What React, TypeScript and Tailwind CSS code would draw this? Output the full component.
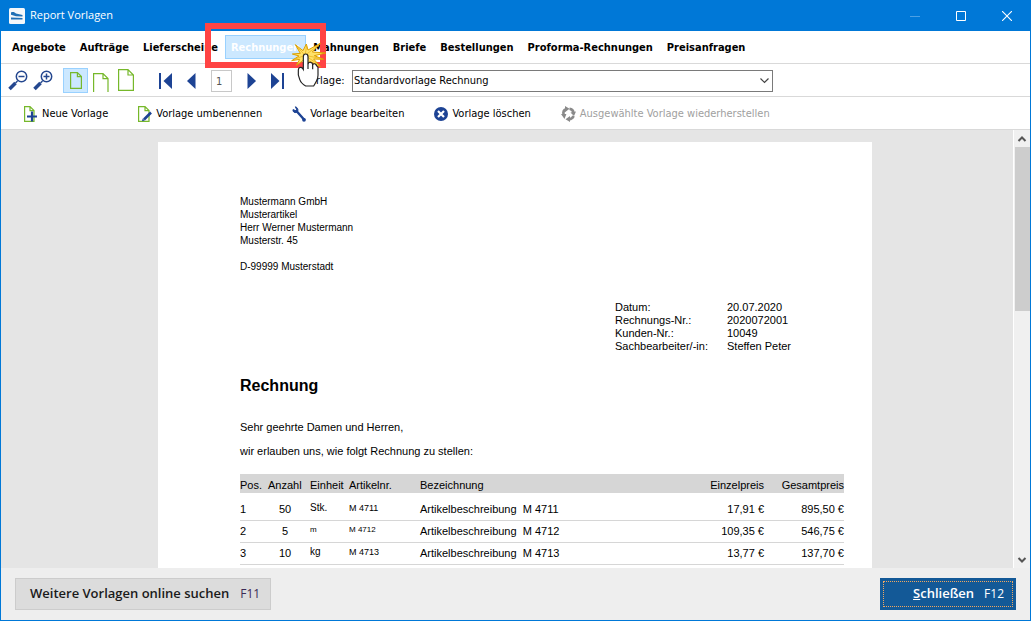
import type { ReactNode } from "react";

const menuItems = [
  "Angebote",
  "Aufträge",
  "Lieferscheine",
  "Rechnungen",
  "Mahnungen",
  "Briefe",
  "Bestellungen",
  "Proforma-Rechnungen",
  "Preisanfragen",
];

const address = [
  "Mustermann GmbH",
  "Musterartikel",
  "Herr Werner Mustermann",
  "Musterstr. 45",
  "",
  "D-99999 Musterstadt",
];

const meta = [
  ["Datum:", "20.07.2020"],
  ["Rechnungs-Nr.:", "2020072001"],
  ["Kunden-Nr.:", "10049"],
  ["Sachbearbeiter/-in:", "Steffen Peter"],
];

type Row = {
  pos: number;
  count: number;
  unit: string;
  sku: string;
  small?: boolean;
  price: string;
  total: string;
};

const rows: Row[] = [
  { pos: 1, count: 50, unit: "Stk.", sku: "M 4711", price: "17,91 €", total: "895,50 €" },
  { pos: 2, count: 5, unit: "m", sku: "M 4712", small: true, price: "109,35 €", total: "546,75 €" },
  { pos: 3, count: 10, unit: "kg", sku: "M 4713", price: "13,77 €", total: "137,70 €" },
];

function Magnifier({ plus }: { plus?: boolean }) {
  return (
    <svg width="20" height="21" viewBox="0 0 20 21" fill="none">
      <circle cx="13.5" cy="6.5" r="5.2" stroke="#24478f" strokeWidth="1.5" />
      <path d="M9.5 11 7.5 13" stroke="#24478f" strokeWidth="1.5" />
      <path d="M7.5 13 1.5 19" stroke="#24478f" strokeWidth="3.6" />
      <path d={plus ? "M10.5 6.5h6M13.5 3.5v6" : "M10.5 6.5h6"} stroke="#24478f" strokeWidth="1.5" />
    </svg>
  );
}

function PageOutline({ open, large }: { open?: boolean; large?: boolean }) {
  if (large) {
    return (
      <svg width="16" height="22" viewBox="0 0 16 22" fill="none" stroke="#76b82a" strokeWidth="1.2">
        <path d="M.6.6h9.4l5.4 5.4v15.4H.6z M10 .6V6h5.4" />
      </svg>
    );
  }
  return (
    <svg width="16" height="20" viewBox="0 0 16 20" fill="none" stroke="#76b82a" strokeWidth="1.2">
      {open ? (
        <path d="M.6 20V1.6h9.4L15 6.6V20 M10 1.6v5h5" />
      ) : (
        <path d="M2.6 2.6h6.8l4 4v11.8H2.6z M9.4 2.6v4h4" />
      )}
    </svg>
  );
}

function Arrow({ left, bar }: { left?: boolean; bar?: boolean }) {
  return (
    <svg width="13" height="16" viewBox="0 0 13 16" fill="#1d4394" className={left ? "rotate-180" : ""}>
      <path d={bar ? "M0 0l8.5 8L0 16zM11 0h2v16h-2z" : "M2.5 0l8.5 8-8.5 8z"} />
    </svg>
  );
}

function NewIcon() {
  return (
    <svg width="15" height="16" viewBox="0 0 15 16" fill="none">
      <path d="M1.6.6h5.4l4 4v10.8H1.6z M7 .6v4h4" stroke="#76b82a" strokeWidth="1.2" />
      <path d="M9 5.5v10M4 10.5h10" stroke="#1d4394" strokeWidth="2.2" />
    </svg>
  );
}

function RenameIcon() {
  return (
    <svg width="14" height="16" viewBox="0 0 14 16" fill="none">
      <path d="M.6.6H7l4 4v10.8H.6z M7 .6v4h4" stroke="#76b82a" strokeWidth="1.2" />
      <path d="M13 6.5l-7 7" stroke="#1d4394" strokeWidth="2.6" />
      <path d="M4 15.3l.7-2.8 2 2z" fill="#1d4394" />
    </svg>
  );
}

function WrenchIcon() {
  return (
    <svg width="14" height="16" viewBox="0 0 14 16" fill="none" stroke="#1d4394">
      <path d="M4.5 5l7.5 8.5" strokeWidth="2.4" strokeLinecap="round" />
      <path d="M3.4.8l1.2 2.6-1.2 1.2L1 3.6C.6 5.7 2.4 7.2 4.6 6.4 6.8 5 6.2 1.7 3.4.8z" fill="#1d4394" />
      <circle cx="12" cy="13.8" r="1" strokeWidth="1.8" />
    </svg>
  );
}

function DeleteIcon() {
  return (
    <svg width="14" height="14" viewBox="0 0 14 14">
      <circle cx="7" cy="7" r="7" fill="#1d4394" />
      <path d="M4 4l6 6M10 4l-6 6" stroke="#fff" strokeWidth="2.2" />
    </svg>
  );
}

function RestoreIcon() {
  return (
    <svg width="15" height="16" viewBox="0 0 15 16" fill="none" stroke="#8a8a8a" strokeWidth="2.6">
      <path d="M2.6 8.5C2 6 3 4 5 3.2" />
      <path d="M8.5 2.8c2.3.3 3.7 1.7 4 4" />
      <path d="M12.6 10c-.8 2-2 3-4.6 3.2" />
      <path d="M4 0l4.5 2.8L4 6.2zM15 5.5l-2 4.5-3.5-3.5zM9 10v6l-4.5-2.8zM0 8h5.4L3.5 13z" fill="#8a8a8a" stroke="none" />
    </svg>
  );
}

function ClickCursor() {
  return (
    <svg
      width="36"
      height="48"
      viewBox="20 30 108 144"
      aria-hidden="true"
      className="pointer-events-none absolute top-[5px] -right-[21px] z-20"
    >
      <path
        d="M33 44L56 62 66 42 71 60 108 40 84 66 124 69 90 77 118 88 88 87 108 110 76 94 68 110 56 92 36 106 46 88 22 92 44 78 24 72 48 70z"
        fill="#ffe169"
        stroke="#dda000"
        strokeWidth="3"
      />
      <path d="M38 50l24 26 40-30M30 88l32-12 50 10M62 76l38 26M62 76l5-28" stroke="#e8ae10" strokeWidth="2" fill="none" />
      <path
        d="M57 80q0-8 7-8t7 8v22q2-6 8-5 6 1 6 7 3-4 8-2 3 2 4 6 4 0 4 6v22q0 10-5 18-4 8-8 14H64q-14-8-18-20-6-14-4-28 1-9 8-8 4 1 7 6z"
        fill="#fff"
        stroke="#222"
        strokeWidth="3.5"
      />
      <path d="M71 101v16M85 104v14" stroke="#222" strokeWidth="3.5" />
    </svg>
  );
}

function Action({ icon, children, disabled }: { icon: ReactNode; children: string; disabled?: boolean }) {
  return (
    <button type="button" disabled={disabled} className="flex items-center gap-1 whitespace-nowrap disabled:text-[#a0a0a0]">
      {icon}
      {children}
    </button>
  );
}

function TitleBar() {
  return (
    <header className="flex h-[31px] shrink-0 items-center bg-[#0078d7] pl-2 text-white">
      <svg width="16" height="16" viewBox="0 0 16 16">
        <rect width="16" height="16" rx="1.5" fill="#f4f7fa" />
        <path d="M2 4.5C4 3.6 6 4.400 7 5.6l6.500 1.400v1.600L7 8.200 2 6.800zM2 9.600l11.500.4v1.600H2z" fill="#1f6fb5" />
      </svg>
      <h1 className="flex-1 pl-[5px] font-['Open_Sans','Noto_Sans',sans-serif] text-[11px]">Report Vorlagen</h1>
      <button type="button" aria-label="Minimieren" className="flex w-[46px] justify-center">
        <svg width="10" height="10" viewBox="0 0 10 10" stroke="#4ba0e5">
          <path d="M0 5.5h10" />
        </svg>
      </button>
      <button type="button" aria-label="Maximieren" className="flex w-[46px] justify-center">
        <svg width="10" height="10" viewBox="0 0 10 10" fill="none" stroke="#fff">
          <path d="M.5.5h9v9h-9z" />
        </svg>
      </button>
      <button type="button" aria-label="Fenster schließen" className="flex w-[46px] justify-center">
        <svg width="10" height="10" viewBox="0 0 10 10" stroke="#fff" strokeWidth="1.1">
          <path d="M0 0l10 10M10 0L0 10" />
        </svg>
      </button>
    </header>
  );
}

function Menu() {
  return (
    <nav className="flex h-[33px] shrink-0 items-center border-b border-[#d9d9d9] pl-1 font-bold">
      {menuItems.map((item) =>
        item === "Rechnungen" ? (
          <div key={item} className="relative">
            <button type="button" className="block h-6 border border-[#99d1ff] bg-[#cce8ff] px-[5px] pt-0.5 text-white">
              {item}
            </button>
            <span className="pointer-events-none absolute -top-3 -right-5 -bottom-[9px] -left-5 z-10 border-6 border-[#ff4444]" />
            <ClickCursor />
          </div>
        ) : (
          <button key={item} type="button" className="h-6 px-[7px] pt-0.5 whitespace-nowrap">
            {item}
          </button>
        )
      )}
    </nav>
  );
}

function Toolbar() {
  return (
    <div className="flex h-[33px] shrink-0 items-center border-b border-[#d9d9d9] pl-[7px]">
      <div className="flex items-center gap-[5px]">
        <button type="button" aria-label="Verkleinern">
          <Magnifier />
        </button>
        <button type="button" aria-label="Vergrößern">
          <Magnifier plus />
        </button>
      </div>
      <div className="ml-[10px] flex items-center gap-[5px]">
        <button
          type="button"
          aria-label="Ganze Seite"
          className="flex h-[25px] w-[25px] items-center justify-center border border-[#99d1ff] bg-[#cce8ff]"
        >
          <PageOutline />
        </button>
        <button type="button" aria-label="Seitenbreite" className="mt-1">
          <PageOutline open />
        </button>
        <button type="button" aria-label="Originalgröße" className="ml-1">
          <PageOutline large />
        </button>
      </div>
      <div className="ml-[25px] flex items-center gap-[13px] pt-0.5">
        <button type="button" aria-label="Erste Seite">
          <Arrow left bar />
        </button>
        <button type="button" aria-label="Vorherige Seite">
          <Arrow left />
        </button>
        <input
          aria-label="Seite"
          defaultValue="1"
          className="h-[22px] w-[21px] border border-[#c8c8c8] pl-1 text-[#555]"
        />
        <button type="button" aria-label="Nächste Seite">
          <Arrow />
        </button>
        <button type="button" aria-label="Letzte Seite">
          <Arrow bar />
        </button>
      </div>
      <div className="ml-5 flex min-w-0 items-center pt-0.5">
        <label htmlFor="template" className="w-12">
          Vorlage:
        </label>
        <div className="relative">
          <select id="template" className="block h-[22px] w-[421px] appearance-none border border-[#7a7a7a] bg-white pl-px">
            <option>Standardvorlage Rechnung</option>
          </select>
          <svg
            width="9"
            height="6"
            viewBox="0 0 9 6"
            fill="none"
            stroke="#444"
            strokeWidth="1.2"
            className="pointer-events-none absolute top-2 right-1"
          >
            <path d="M.5.5l4 4 4-4" />
          </svg>
        </div>
      </div>
    </div>
  );
}

function Report() {
  return (
    <article className="mt-3 w-[714px] shrink-0 bg-white px-[82px] pt-[53px] font-['Liberation_Sans',Arial,sans-serif] text-[11px]">
      <address className="text-[10px] leading-[13px] not-italic">
        {address.map((line, i) => (
          <p key={i} className="h-[13px]">
            {line}
          </p>
        ))}
      </address>
      <dl className="mt-7 ml-[375px] grid grid-cols-[112px_1fr] leading-[13px] whitespace-nowrap">
        {meta.map(([label, value]) => (
          <div key={label} className="contents">
            <dt>{label}</dt>
            <dd>{value}</dd>
          </div>
        ))}
      </dl>
      <h2 className="mt-[23px] text-[16px] leading-5 font-bold">Rechnung</h2>
      <p className="mt-[23px] leading-4">Sehr geehrte Damen und Herren,</p>
      <p className="mt-2 leading-4">wir erlauben uns, wie folgt Rechnung zu stellen:</p>
      <table className="mt-[15px] w-[604px] table-fixed border-collapse leading-4">
        <colgroup>
          <col className="w-7" />
          <col className="w-[42px]" />
          <col className="w-[39px]" />
          <col className="w-[71px]" />
          <col />
          <col className="w-20" />
          <col className="w-20" />
        </colgroup>
        <thead>
          <tr className="h-[19px] bg-[#d6d6d6] text-left [&>th]:p-0 [&>th]:pt-1 [&>th]:leading-[15px] [&>th]:font-normal">
            <th>Pos.</th>
            <th>Anzahl</th>
            <th>Einheit</th>
            <th>Artikelnr.</th>
            <th>Bezeichnung</th>
            <th className="text-right">Einzelpreis</th>
            <th className="text-right">Gesamtpreis</th>
          </tr>
        </thead>
        <tbody>
          {rows.map((row, i) => (
            <tr
              key={row.pos}
              className={`border-b border-[#d6d6d6] align-bottom [&>td]:pb-[3px] ${i === 0 ? "h-[27px]" : "h-[22px]"}`}
            >
              <td>{row.pos}</td>
              <td className="pr-2 text-center">{row.count}</td>
              <td className={row.small ? "text-[8px] leading-[18px]" : "text-[10px] leading-[18px]"}>{row.unit}</td>
              <td className={row.small ? "text-[8px] leading-[18px]" : "text-[9px] leading-[18px]"}>{row.sku}</td>
              <td>Artikelbeschreibung&nbsp; {row.sku}</td>
              <td className="text-right">{row.price}</td>
              <td className="text-right">{row.total}</td>
            </tr>
          ))}
        </tbody>
      </table>
    </article>
  );
}

function ScrollBar() {
  return (
    <div aria-hidden="true" className="flex w-[17px] shrink-0 flex-col items-center border-l border-white bg-[#f0f0f0]">
      <svg width="16" height="17" viewBox="0 0 16 17" fill="none" stroke="#555" strokeWidth="2">
        <path d="M4.5 11L8 7.5l3.5 3.5" />
      </svg>
      <div className="h-[164px] w-[15px] bg-[#cdcdcd]" />
      <svg width="16" height="17" viewBox="0 0 16 17" fill="none" stroke="#555" strokeWidth="2" className="mt-auto">
        <path d="M4.5 7L8 10.5 11.5 7" />
      </svg>
    </div>
  );
}

export default function App() {
  return (
    <div className="flex h-screen flex-col overflow-hidden border-x border-b border-[#0078d7] bg-white font-['DejaVu_Sans_Condensed','DejaVu_Sans',sans-serif] text-[11px] text-black">
      <TitleBar />
      <Menu />
      <Toolbar />
      <div className="flex h-[33px] shrink-0 items-center border-b border-[#d9d9d9] pt-0.5 pl-[22px]">
        <div className="flex items-center gap-[30px]">
          <Action icon={<NewIcon />}>Neue Vorlage</Action>
          <Action icon={<RenameIcon />}>Vorlage umbenennen</Action>
          <Action icon={<WrenchIcon />}>Vorlage bearbeiten</Action>
          <Action icon={<DeleteIcon />}>Vorlage löschen</Action>
          <Action icon={<RestoreIcon />} disabled>
            Ausgewählte Vorlage wiederherstellen
          </Action>
        </div>
      </div>
      <main className="flex min-h-0 flex-1 bg-[#e5e5e5]">
        <div className="flex min-w-0 flex-1 justify-center overflow-hidden pl-4">
          <Report />
        </div>
        <ScrollBar />
      </main>
      <footer className="flex h-[52px] shrink-0 items-center justify-between bg-[#eee] px-[14px] font-['Open_Sans','Noto_Sans',sans-serif] text-[13px]">
        <button type="button" className="flex h-8 items-center gap-[11px] border border-[#ccc] bg-[#dcdcdc] pr-[10px] pl-[14px] text-[#1a1a1a]">
          <span className="font-semibold">Weitere Vorlagen online suchen</span>
          <span className="text-[12px] text-[#3b2a55]">F11</span>
        </button>
        <button type="button" className="bg-[#135997] p-[3px] text-white">
          <span className="flex h-[26px] w-[130px] items-center justify-end gap-[10px] border border-dotted border-[#f0a860] pr-2">
            <span className="font-semibold">
              <u>S</u>chließen
            </span>
            <span className="text-[12px]">F12</span>
          </span>
        </button>
      </footer>
    </div>
  );
}
